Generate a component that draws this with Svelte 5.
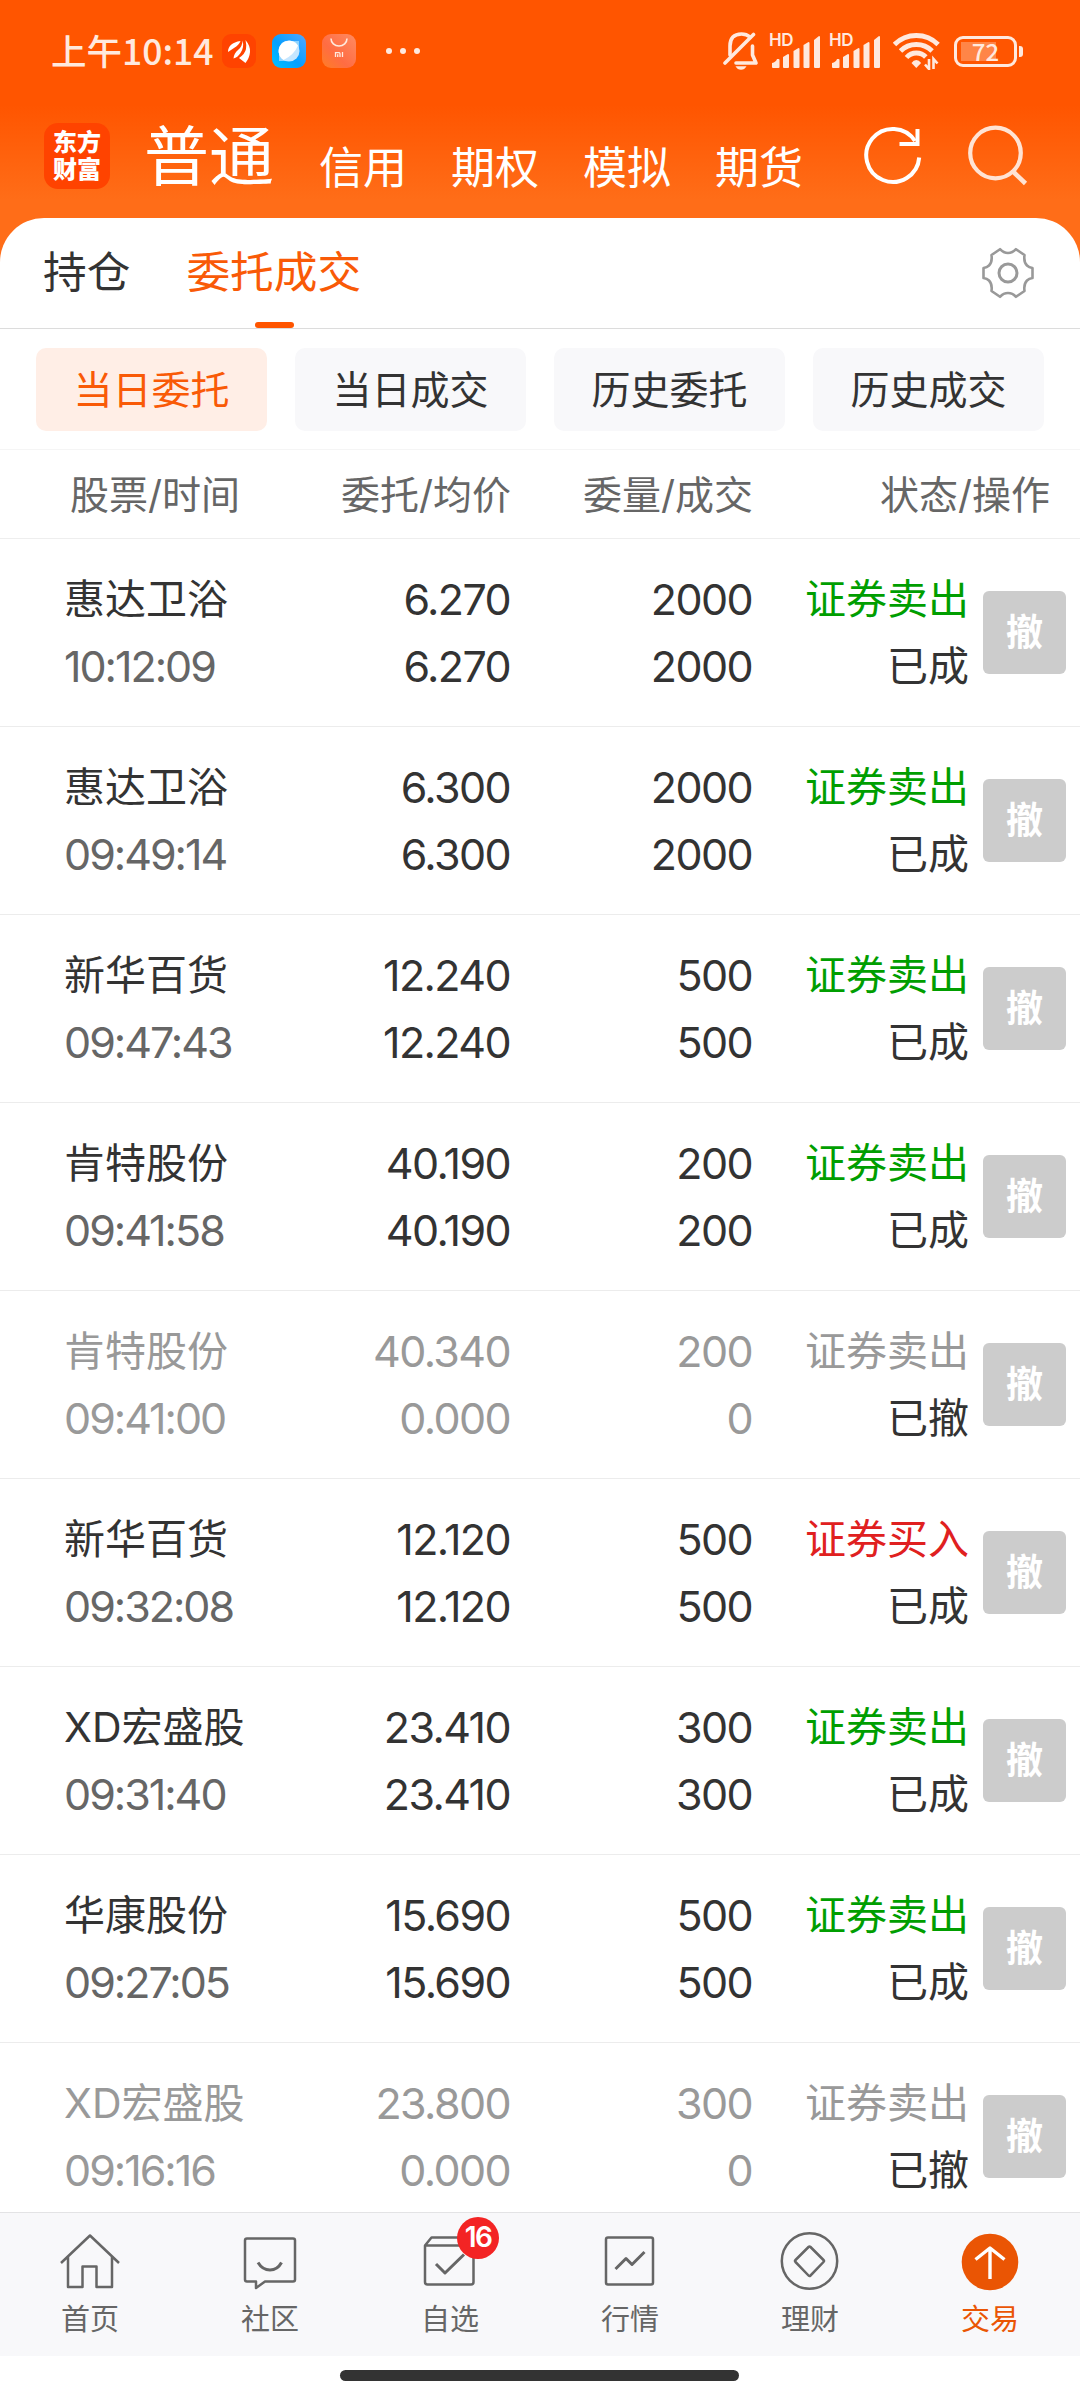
<script lang="ts">
	type Order = {
		name: string;
		time: string;
		price: string;
		avg: string;
		amount: string;
		filled: string;
		side: 'buy' | 'sell';
		cancelled?: boolean;
	};

	const markets = ['信用', '期权', '模拟', '期货'];
	const filters = ['当日委托', '当日成交', '历史委托', '历史成交'];
	const tabs = ['首页', '社区', '自选', '行情', '理财', '交易'];

	let activeFilter = $state('当日委托');
	let activeTab = $state('交易');

	const orders: Order[] = [
		{ name: '惠达卫浴', time: '10:12:09', price: '6.270', avg: '6.270', amount: '2000', filled: '2000', side: 'sell' },
		{ name: '惠达卫浴', time: '09:49:14', price: '6.300', avg: '6.300', amount: '2000', filled: '2000', side: 'sell' },
		{ name: '新华百货', time: '09:47:43', price: '12.240', avg: '12.240', amount: '500', filled: '500', side: 'sell' },
		{ name: '肯特股份', time: '09:41:58', price: '40.190', avg: '40.190', amount: '200', filled: '200', side: 'sell' },
		{ name: '肯特股份', time: '09:41:00', price: '40.340', avg: '0.000', amount: '200', filled: '0', side: 'sell', cancelled: true },
		{ name: '新华百货', time: '09:32:08', price: '12.120', avg: '12.120', amount: '500', filled: '500', side: 'buy' },
		{ name: 'XD宏盛股', time: '09:31:40', price: '23.410', avg: '23.410', amount: '300', filled: '300', side: 'sell' },
		{ name: '华康股份', time: '09:27:05', price: '15.690', avg: '15.690', amount: '500', filled: '500', side: 'sell' },
		{ name: 'XD宏盛股', time: '09:16:16', price: '23.800', avg: '0.000', amount: '300', filled: '0', side: 'sell', cancelled: true }
	];
</script>

{#snippet signal()}
	<div class="signal">
		<span>HD</span>
		<svg width="50" height="36" viewBox="0 0 50 36">
			<path d="M2 34v-4q4-1 5-4h1.500q1 0 1 1v7q0 1-1 1h-5.500q-1 0-1-1z" />
			<path d="M13 34V24l5-3q1 0 1 1v12q0 1-1 1h-4q-1 0-1-1z" />
			<path d="M23.500 34V18l5-3q1 0 1 1v18q0 1-1 1h-4q-1 0-1-1z" />
			<path d="M33.500 34V12l5-3q1 0 1 1v24q0 1-1 1h-4q-1 0-1-1z" />
			<path d="M44 34V7l5-4q1 0 1 1v30q0 1-1 1h-4q-1 0-1-1z" />
		</svg>
	</div>
{/snippet}

<div class="screen">
	<!-- System status bar -->
	<div class="status-bar">
		<span class="clock">上午10:14</span>
		<div class="notices">
			<svg width="34" height="34" viewBox="0 0 34 34">
				<rect width="34" height="34" rx="9" fill="#ff4300" />
				<path d="M18.500 7Q6 9 6 18q3-2 6-4 5-3 6.500-7z" fill="#fff" />
				<path d="M20.500 6.500q0 6-4.500 9.500-4 3-4.500 8.500 4-1 7-5.500 4-6 2-12.500z" fill="#fff" />
				<path d="M23.500 6q5 6 4.500 12-.5 6-4.500 11l-6.500-5q6-4 7-9 .7-4-.5-9z" fill="#fff" />
			</svg>
			<svg width="34" height="34" viewBox="0 0 34 34">
				<defs>
					<linearGradient id="blue" x1="0" y1="1" x2="1" y2="0">
						<stop offset="0" stop-color="#00c3ff" />
						<stop offset="0.45" stop-color="#049fff" />
						<stop offset="1" stop-color="#53a7ff" />
					</linearGradient>
				</defs>
				<rect width="34" height="34" rx="9" fill="url(#blue)" />
				<path d="M7 21v6h6l14-14V7h-6z" fill="#8fd4ff" />
				<circle cx="17" cy="17" r="10.500" fill="#c5e6ff" />
				<path d="M11.500 26A10.500 10.500 0 1 1 26 11.500Q22 21 11.500 26z" fill="#fff" />
			</svg>
			<svg width="34" height="34" viewBox="0 0 34 34">
				<defs>
					<linearGradient id="peach" x1="0" y1="1" x2="1" y2="0">
						<stop offset="0" stop-color="#ff7e25" />
						<stop offset="0.4" stop-color="#ff6c43" />
						<stop offset="1" stop-color="#ff8b61" />
					</linearGradient>
				</defs>
				<rect width="34" height="34" rx="9" fill="url(#peach)" />
				<path d="M9 4.500a8 7.500 0 0 0 16 0" fill="none" stroke="#ffeade" stroke-width="1.600" />
				<path d="M13.500 23v-4.300h3.500q1 0 1 1V23M15.700 20.300V23M20.500 18v5" fill="none" stroke="#ffeade" stroke-width="1.300" />
			</svg>
		</div>
		<div class="dots"><i></i><i></i><i></i></div>
		<div class="system">
			<svg width="36" height="38" viewBox="0 0 36 38" fill="none" stroke="#ffe9de" stroke-width="3.600" stroke-linecap="round">
				<path d="M7 23V14Q7 2 18.500 2q5 0 8.500 3M29.500 14v9l3.500 8H13" stroke-linejoin="round" />
				<path d="M2 31L30.500 2.500" />
				<path d="M12.500 34.200h11q-2 3.600-5.500 3.600t-5.500-3.600z" fill="#ffe9de" stroke="none" />
			</svg>
			<div class="signals">
				{@render signal()}
				{@render signal()}
			</div>
			<svg width="47" height="38" viewBox="0 0 47 38" fill="none" stroke="#ffe9de" stroke-width="4.800">
				<path d="M1.500 12.500q9-9 21.800-9t21.800 9" />
				<path d="M7.500 19q6.500-6.500 15.800-6.500t15.800 6.500" />
				<path d="M13.500 25.500q4-4.500 9.800-4.500t9.500 4" />
				<path d="M18.500 31q2-3 4.800-3t4.800 3l-4.800 5z" fill="#ffe9de" stroke="none" />
				<path d="M36 27v10l-4-4.500M40.500 37V27l4 4.500" stroke-width="2.600" />
			</svg>
			<div class="battery"><span>72</span></div>
		</div>
	</div>

	<!-- Account switcher -->
	<header>
		<div class="logo">东方<br />财富</div>
		<h1>普通</h1>
		<nav class="markets">
			{#each markets as market}
				<span>{market}</span>
			{/each}
		</nav>
		<svg class="refresh" width="60" height="62" viewBox="0 0 60 62" fill="none" stroke="#fff" stroke-width="4">
			<path d="M56.200 32.500A26.500 26.500 0 1 1 52 16" />
			<path d="M36.500 19h18V4" />
		</svg>
		<svg width="60" height="62" viewBox="0 0 60 62" fill="none" stroke="#ffe3d4" stroke-width="4.200">
			<circle cx="27.500" cy="28" r="25.300" />
			<path d="M44.500 46L57.500 58.500" stroke-width="4.600" />
		</svg>
	</header>

	<main>
		<div class="page-tabs">
			<span class="page-tab">持仓</span>
			<span class="page-tab active">委托成交</span>
			<svg width="54" height="54" viewBox="-27 -27 54 54" fill="none" stroke="#999" stroke-width="2.600" stroke-linejoin="round">
				<path
					d="M24.500-5V5Q21 5.500 19 7.500Q15.500 11 16.500 18L8 23.800Q4.500 20 0 20T-8 23.800L-16.500 18Q-15.500 11-19 7.500Q-21 5.500-24.500 5V-5Q-21-5.500-19-7.500Q-15.500-11-16.500-18L-8-23.800Q-4.500-20 0-20T8-23.800L16.500-18Q15.500-11 19-7.500Q21-5.500 24.500-5Z"
				/>
				<circle r="9" stroke-width="3" />
			</svg>
		</div>

		<div class="filters">
			{#each filters as filter}
				<button class:active={filter === activeFilter} onclick={() => (activeFilter = filter)}>
					{filter}
				</button>
			{/each}
		</div>

		<div class="columns">
			<span>股票/时间</span>
			<span>委托/均价</span>
			<span>委量/成交</span>
			<span>状态/操作</span>
		</div>

		<div class="orders">
			{#each orders as order}
				<div class="order" class:cancelled={order.cancelled}>
					<div class="cell stock">
						<span>{order.name}</span>
						<span class="time">{order.time}</span>
					</div>
					<div class="cell number">
						<span>{order.price}</span>
						<span>{order.avg}</span>
					</div>
					<div class="cell number">
						<span>{order.amount}</span>
						<span>{order.filled}</span>
					</div>
					<div class="cell">
						<span class={order.side}>{order.side === 'buy' ? '证券买入' : '证券卖出'}</span>
						<span class="state">{order.cancelled ? '已撤' : '已成'}</span>
					</div>
					<button class="revoke">撤</button>
				</div>
			{/each}
		</div>
	</main>

	<!-- Bottom navigation -->
	<nav class="tab-bar">
		{#each tabs as tab, i}
			<button class:active={tab === activeTab} onclick={() => (activeTab = tab)}>
				<svg width="60" height="60" viewBox="0 0 60 60" fill="none" stroke="#666" stroke-width="2.500" stroke-linejoin="round">
					{#if i === 0}
						<path d="M1 32L30 4.500 59 32M8 26v30h14.500V35.500h14V56H52V26" />
					{:else if i === 1}
						<path d="M7 7.500h46q2 0 2 2v39q0 2-2 2H25l-9 6.500v-6.500H7q-2 0-2-2v-39q0-2 2-2z" />
						<path d="M18 31.500q4.500 7.500 12 7.500t11.500-7.500" stroke-width="3" />
					{:else if i === 2}
						<path d="M5 14.500h48.500V51q0 2.500-2.500 2.500H7.500Q5 53.500 5 51zL11.500 6.500H48l5.500 8" />
						<path d="M16 33l9 9 19-18.500" stroke-width="3" />
					{:else if i === 3}
						<rect x="6" y="6.500" width="47" height="47" rx="2" />
						<path d="M15.500 38L26 27.500l6 6L44.500 21" stroke-width="3" />
					{:else if i === 4}
						<circle cx="29.500" cy="30" r="27.700" />
						<path d="M28.500 16L15.500 29q-1 1 0 2l13 13.500q1 1 2 0l13-13.500q1-1 0-2l-13-13q-1-1-2 0z" />
					{:else}
						<circle cx="30" cy="31" r="28.300" fill="#ea5504" stroke="none" />
						<path d="M30 17.500V48M15.500 28.500L30 17l14.500 11.500" stroke="#fff" stroke-width="3.400" />
					{/if}
				</svg>
				{#if tab === '自选'}
					<span class="badge">16</span>
				{/if}
				<span class="label">{tab}</span>
			</button>
		{/each}
	</nav>
	<div class="gesture"><i></i></div>
</div>

<style>
	:global(body) {
		margin: 0;
		background: #fff;
	}

	.screen {
		display: flex;
		flex-direction: column;
		width: 1080px;
		height: 2400px;
		overflow: hidden;
		color: #333;
		font-family: Inter, 'Noto Sans CJK SC', sans-serif;
		background: linear-gradient(#ff5500 0, #ff5500 105px, #ff6d18 200px, #ff6d18 300px, #fff 300px);
	}

	.screen * {
		box-sizing: border-box;
	}

	svg {
		display: block;
		flex: none;
	}

	button {
		padding: 0;
		border: none;
		color: inherit;
		font-family: inherit;
		cursor: pointer;
	}

	.status-bar {
		display: flex;
		align-items: center;
		height: 102px;
		padding: 0 57px 0 51px;
		color: #ffe9de;
	}

	.clock {
		width: 171px;
		margin-top: -3px;
		font-family: 'Noto Sans CJK SC', sans-serif;
		font-size: 35.5px;
		font-weight: 500;
		line-height: 50px;
		white-space: nowrap;
	}

	.notices {
		display: flex;
		gap: 16px;
	}

	.dots {
		display: flex;
		gap: 8px;
		margin-left: 30px;
	}

	.dots i {
		width: 6px;
		height: 6px;
		border-radius: 50%;
		background: #ffe9de;
	}

	.system {
		display: flex;
		align-items: center;
		margin-left: auto;
	}

	.signals {
		display: flex;
		gap: 10px;
		margin: 0 13px 0 11px;
	}

	.signal {
		position: relative;
		fill: #ffe9de;
	}

	.signal span {
		position: absolute;
		top: -4px;
		left: -1px;
		font-size: 17px;
		font-weight: 600;
		letter-spacing: -0.5px;
		line-height: 22px;
	}

	.battery {
		position: relative;
		width: 63px;
		height: 31px;
		margin: 0 6px 0 14px;
		border: 3px solid #ffe9de;
		border-radius: 9px;
		background: linear-gradient(#ff8547, #ff8547) 4px 3px / 35px 19px no-repeat;
		font-family: 'Noto Sans CJK SC', sans-serif;
		font-size: 24px;
		font-weight: 500;
		line-height: 23px;
		text-align: center;
	}

	.battery::after {
		content: '';
		position: absolute;
		right: -9px;
		top: 7px;
		width: 4px;
		height: 11px;
		border-radius: 0 3px 3px 0;
		background: #ffe9de;
	}

	header {
		display: flex;
		align-items: center;
		height: 116px;
		padding: 0 52px 8px 44px;
		color: #fff;
	}

	.logo {
		width: 66px;
		height: 66px;
		margin-right: 34px;
		padding-top: 6px;
		border-radius: 14px;
		background: #ff4300;
		font-size: 24px;
		font-weight: 900;
		line-height: 27px;
		text-align: center;
	}

	h1 {
		margin: 2px 0 0;
		font-size: 65px;
		font-weight: 400;
		line-height: 66px;
	}

	.markets {
		display: flex;
		gap: 44px;
		margin: 24px auto 0 45px;
		font-size: 44px;
		line-height: 48px;
	}

	.refresh {
		margin-right: 45px;
	}

	main {
		display: flex;
		flex: 1;
		flex-direction: column;
		min-height: 0;
		border-radius: 44px 44px 0 0;
		background: #fff;
	}

	.page-tabs {
		display: flex;
		flex: none;
		align-items: center;
		height: 111px;
		padding: 0 45px 0 43px;
		border-bottom: 1px solid #dcdcdc;
		font-size: 43.7px;
	}

	.page-tab {
		position: relative;
		margin-right: 56px;
		line-height: 110px;
	}

	.page-tab.active {
		color: #f95a07;
	}

	.page-tab.active::after {
		content: '';
		position: absolute;
		bottom: 0;
		left: 50%;
		width: 39px;
		height: 6px;
		margin-left: -19px;
		border-radius: 3px;
		background: #ff5500;
	}

	.page-tabs svg {
		margin-left: auto;
	}

	.filters {
		display: flex;
		flex: none;
		gap: 28px;
		height: 121px;
		padding: 19px 36px 0;
		border-bottom: 1px solid #f5f5f5;
	}

	.filters button {
		width: 231px;
		height: 83px;
		border-radius: 10px;
		background: #f8f8fa;
		font-size: 39px;
		line-height: 82px;
	}

	.filters button.active {
		background: #ffeee6;
		color: #f95a07;
	}

	.columns {
		display: grid;
		flex: none;
		grid-template-columns: 240px 271px 242px 297px;
		align-items: center;
		height: 89px;
		padding-bottom: 5px;
		border-bottom: 1px solid #eee;
		color: #666;
		font-size: 39px;
		text-align: right;
	}

	.orders {
		flex: 1;
		min-height: 0;
		overflow: hidden;
	}

	.order {
		display: grid;
		grid-template-columns: 280px 230px 242px 217px 83px;
		align-items: center;
		height: 188px;
		border-bottom: 1px solid #ececec;
		font-size: 41px;
	}

	.cell {
		display: flex;
		flex-direction: column;
		align-items: flex-end;
	}

	.cell span {
		height: 67px;
		line-height: 67px;
		white-space: nowrap;
	}

	.stock {
		align-items: flex-start;
		padding-left: 64px;
	}

	.number {
		font-size: 43px;
		letter-spacing: -1.6px;
	}

	.time {
		color: #666;
		font-size: 43px;
		letter-spacing: -2px;
	}

	.sell {
		color: #009e00;
	}

	.buy {
		color: #e02020;
	}

	.cancelled {
		color: #999;
	}

	.cancelled .time,
	.cancelled .sell {
		color: #999;
	}

	.state {
		color: #333;
	}

	.revoke {
		width: 83px;
		height: 83px;
		margin-left: 14px;
		padding-bottom: 5px;
		border-radius: 6px;
		background: #ccc;
		color: #fff;
		font-size: 37px;
		font-weight: 700;
	}

	.tab-bar {
		display: flex;
		flex: none;
		height: 144px;
		border-top: 1px solid #e3e3e5;
		background: #f8f8fa;
		color: #666;
	}

	.tab-bar button {
		position: relative;
		display: flex;
		flex: 1;
		flex-direction: column;
		align-items: center;
		padding-top: 18px;
		background: none;
	}

	.tab-bar .active {
		color: #ea5504;
	}

	.label {
		margin-top: 9px;
		font-size: 29px;
		line-height: 40px;
	}

	.badge {
		position: absolute;
		top: 4px;
		left: 97px;
		width: 42px;
		height: 42px;
		border-radius: 50%;
		background: #f32424;
		color: #fff;
		font-size: 28px;
		font-weight: 600;
		letter-spacing: -1.5px;
		line-height: 41px;
		text-align: center;
	}

	.gesture {
		display: flex;
		flex: none;
		justify-content: center;
		height: 44px;
		padding-top: 14px;
		background: #fff;
	}

	.gesture i {
		width: 399px;
		height: 11px;
		margin-right: 1px;
		border-radius: 6px;
		background: #333;
	}
</style>
